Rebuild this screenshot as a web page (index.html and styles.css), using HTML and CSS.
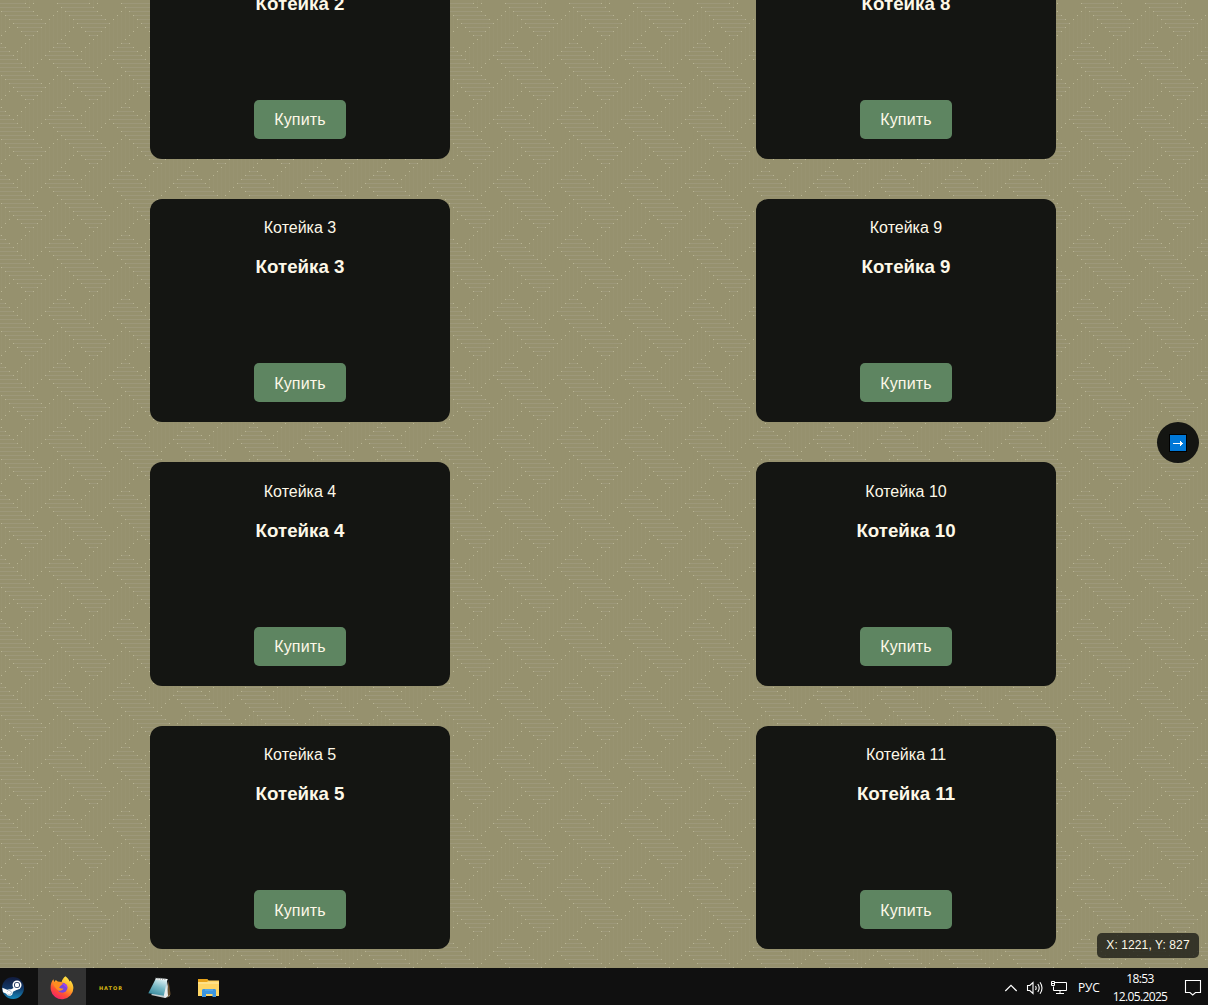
FILE: index.html
```html
<!DOCTYPE html>
<html lang="ru">
<head>
<meta charset="utf-8">
<title>Котейки</title>
<link rel="stylesheet" href="styles.css">
</head>
<body>
<div class="screen">
  <main class="page">
    <svg class="weave" aria-hidden="true">
      <defs>
        <pattern id="weave" width="64" height="64" patternUnits="userSpaceOnUse">
          <g shape-rendering="crispEdges" stroke-width="1" fill="none">
            <path stroke="#989371" d="M61.5 7V39M57.5 11V43M53.5 15V47M49.5 19V51M45.5 23V55M41.5 27V59M37.5 31V63M33.5 35V64M33.5 0V3M29.5 39V64M29.5 0V7M25.5 43V64M25.5 0V3M21.5 47V63M17.5 51V59M1.5 11V35M5.5 15V31M9.5 19V27"/>
            <path stroke="#9d987a" d="M57 3.5H64M0 3.5H25M61 7.5H64M0 7.5H29M1 11.5H33M5 15.5H37M9 19.5H41M13 23.5H45M17 27.5H41M21 31.5H37M25 35.5H33M57 43.5H64M0 43.5H1M53 47.5H64M0 47.5H5M49 51.5H64M0 51.5H9M45 55.5H64M0 55.5H13M49 59.5H64M0 59.5H17M53 63.5H64M0 63.5H21"/>
            <path stroke="#b9b593" d="M25 3.5h1M33 3.5h1M57 3.5h1M29 7.5h1M61 7.5h1M1 11.5h1M33 11.5h1M57 11.5h1M5 15.5h1M37 15.5h1M53 15.5h1M9 19.5h1M41 19.5h1M49 19.5h1M13 23.5h1M45 23.5h1M9 27.5h1M17 27.5h1M41 27.5h1M5 31.5h1M21 31.5h1M37 31.5h1M1 35.5h1M25 35.5h1M33 35.5h1M29 39.5h1M61 39.5h1M1 43.5h1M25 43.5h1M57 43.5h1M5 47.5h1M21 47.5h1M53 47.5h1M9 51.5h1M17 51.5h1M49 51.5h1M13 55.5h1M45 55.5h1M17 59.5h1M41 59.5h1M49 59.5h1M21 63.5h1M37 63.5h1M53 63.5h1"/>
          </g>
        </pattern>
      </defs>
      <rect width="100%" height="100%" fill="url(#weave)"/>
    </svg>
    <div class="catalog">
      <article class="card"><p class="name">Котейка 2</p><h3 class="title">Котейка 2</h3><button class="buy">Купить</button></article>
      <article class="card"><p class="name">Котейка 8</p><h3 class="title">Котейка 8</h3><button class="buy">Купить</button></article>
      <article class="card"><p class="name">Котейка 3</p><h3 class="title">Котейка 3</h3><button class="buy">Купить</button></article>
      <article class="card"><p class="name">Котейка 9</p><h3 class="title">Котейка 9</h3><button class="buy">Купить</button></article>
      <article class="card"><p class="name">Котейка 4</p><h3 class="title">Котейка 4</h3><button class="buy">Купить</button></article>
      <article class="card"><p class="name">Котейка 10</p><h3 class="title">Котейка 10</h3><button class="buy">Купить</button></article>
      <article class="card"><p class="name">Котейка 5</p><h3 class="title">Котейка 5</h3><button class="buy">Купить</button></article>
      <article class="card"><p class="name">Котейка 11</p><h3 class="title">Котейка 11</h3><button class="buy">Купить</button></article>
    </div>
    <button class="next" aria-label="Далее">
      <svg width="18" height="18" viewBox="0 0 18 18"><rect width="18" height="18" fill="#000"/><rect x="1" y="1" width="16" height="16" fill="#0078d7"/><path d="M4 9.5h9M11.5 7v5M12.5 8v3M13.5 9v1" stroke="#fff" fill="none"/></svg>
    </button>
    <div class="coords">X: 1221, Y: 827</div>
  </main>
  <footer class="taskbar">
    <nav class="apps">
      <span class="app app-first">
        <svg width="24" height="24" viewBox="0 0 24 24"><defs><linearGradient id="steam" x2="0" y2="1"><stop stop-color="#111b3d"/><stop offset=".5" stop-color="#123766"/><stop offset="1" stop-color="#1689bd"/></linearGradient></defs><circle cx="12" cy="12" r="11" fill="url(#steam)"/><path d="M1.3 11.8 8 14.5 12.5 12 14 8.5 18.5 12.5 12 15.8 9.5 19.5 2 16.2Z" fill="#fff"/><circle cx="16" cy="9" r="4.5" fill="#fff"/><circle cx="16" cy="9" r="3" fill="#18305a"/><circle cx="16" cy="9" r="2.2" fill="#fff"/><circle cx="8.5" cy="16.5" r="3.2" fill="#fff"/><path d="M6.2 15.7a2.2 2.2 0 1 1 .2 2.3" fill="none" stroke="#8fa5bf" stroke-width=".7"/></svg>
      </span>
      <span class="app app-active">
        <svg width="24" height="24" viewBox="0 0 24 24"><defs><linearGradient id="fox" x1=".85" y1="0" x2=".25" y2="1"><stop stop-color="#fff34f"/><stop offset=".4" stop-color="#ffad25"/><stop offset=".7" stop-color="#ff5034"/><stop offset="1" stop-color="#f21c70"/></linearGradient></defs><path d="M15.5.3C18 2.5 19 4 19.6 5.5l1-1c1.8 2.5 2.8 5 2.8 7.5A11.4 11.4 0 0 1 .8 14C.2 10 1 6 3.4 3.2L4.3 6 5.8 4 8 5.8l3.6.2c.6-2.2 2-4.5 3.9-5.7Z" fill="url(#fox)"/><circle cx="12.3" cy="11.8" r="5" fill="#7745dc"/><path d="M12 7.5c3.6-.7 6 1.8 5.5 5.3-.8-1-1.6-2.2-3-2.6Z" fill="#a344e8"/><path d="M3.5 6.5 8 5.8l4 .2.8 2-2.5 1.9-1.2 1.7c1.6 1.5 3.6.8 4.4 1-1 2.4-4.8 3.1-7 .3C5 11 3 9.5 3.5 6.5Z" fill="#ff8d20"/></svg>
      </span>
      <span class="app"><span class="hator">HATOR</span></span>
      <span class="app">
        <svg width="24" height="24" viewBox="0 0 24 24"><defs><linearGradient id="note" x1=".7" y1="0" x2=".3" y2="1"><stop stop-color="#e4f4f6"/><stop offset=".5" stop-color="#79b9c6"/><stop offset="1" stop-color="#35889c"/></linearGradient></defs><path d="M18.5 3 22 20 17 22 3 19Z" fill="#c3cbcd"/><path d="M20.5 4.5 22.6 18.5 19 22Z" fill="#6c512e"/><path d="M17.5 5 20.2 20 16.8 22 15.5 18Z" fill="#e9eeee"/><path d="M8 2.2 19.5 3 15.8 19.8.3 17.2Z" fill="url(#note)"/><path d="m8 2.2 11.5.8-.3 1.3L7.2 3.8Z" fill="#fff"/><path d="M7.8 1.5v2M10 1.5v2M12.3 1.7v2M14.6 1.9v2M16.9 2v2" stroke="#6b7474" stroke-width=".7"/></svg>
      </span>
      <span class="app">
        <svg width="24" height="24" viewBox="0 0 24 24"><path d="M1 3h9l1.5 1.6H22V20H1Z" fill="#ffd665"/><path d="M1 3h9l1.5 1.6L10 6H1Z" fill="#e7a219"/><path d="M1 6h21v2H1Z" fill="#ffe187"/><path d="M5 21v-6.5c0-1 .7-1.5 1.5-1.5h11c.8 0 1.5.5 1.5 1.5V21h-3.5v-3h-6.5v3Z" fill="#3c96df"/><path d="M8 14h8" stroke="#65b2ee"/></svg>
      </span>
    </nav>
    <div class="tray">
      <svg class="chevron" width="14" height="8" viewBox="0 0 14 8"><path d="m1.3 7 5.7-5.7L12.7 7" fill="none" stroke="#fff" stroke-width="1.2"/></svg>
      <svg class="sound" width="18" height="14" viewBox="0 0 18 14"><path d="M1.5 4.5h2.3L7 1.5v11L3.8 9.5H1.5ZM9.5 5q1.3 2 0 4M11.8 3q2.8 4 0 8M14 1.2q4 5.8 0 11.6" fill="none" stroke="#fff" stroke-width="1.1"/></svg>
      <svg class="network" width="18" height="15" viewBox="0 0 18 15"><path d="M5 2.5h11.5v8H3.5V6.5M10 10.5v3M6 13.5h8M1.5 1.5h3v4h-3ZM1.5 3.5h3" fill="none" stroke="#fff"/></svg>
      <span class="lang">РУС</span>
      <span class="clock"><span>18:53</span><span>12.05.2025</span></span>
      <svg class="notes" width="18" height="18" viewBox="0 0 18 18"><path d="M1.5 1.5h15v12h-5L8.7 16 6 13.5H1.5Z" fill="none" stroke="#fff" stroke-width="1.1"/></svg>
    </div>
  </footer>
</div>
</body>
</html>
```
FILE: styles.css
```css
* { box-sizing: border-box; }

body {
  margin: 0;
  font-family: "Liberation Sans", Arial, sans-serif;
}

.screen {
  display: flex;
  flex-direction: column;
  width: 1208px;
  height: 1005px;
  overflow: hidden;
}

.page {
  position: relative;
  flex: 1;
  min-height: 0;
  overflow: hidden;
  background: #96916e;
}

.weave {
  position: absolute;
  inset: 0;
  width: 100%;
  height: 100%;
}

.catalog {
  position: relative;
  display: grid;
  grid-template-columns: 300px 300px;
  grid-auto-rows: 223.5px;
  gap: 40px 306px;
  margin: -64.7px 0 0 150px;
}

.card {
  display: flex;
  flex-direction: column;
  align-items: center;
  padding: 20px;
  border-radius: 12px;
  background: #141512;
  color: #fdf8e8;
}

.name {
  margin: 0.25px 0 0;
  font-size: 16px;
  line-height: 18px;
}

.title {
  margin: 19px 0 0;
  font-size: 18.72px;
  line-height: 21px;
}

.buy {
  width: 92px;
  height: 39px;
  margin: auto 0 0;
  padding: 2px 0 0;
  border: 0;
  border-radius: 5px;
  background: #5e8561;
  color: #fdf8e8;
  font: 16px "Liberation Sans", Arial, sans-serif;
  letter-spacing: 0.15px;
}

.next {
  position: absolute;
  top: 422px;
  right: 9px;
  display: flex;
  align-items: center;
  justify-content: center;
  width: 42px;
  height: 41px;
  padding: 0;
  border: 0;
  border-radius: 50%;
  background: #141512;
}

.coords {
  position: absolute;
  right: 9px;
  bottom: 10px;
  width: 102px;
  height: 25px;
  border-radius: 5px;
  background: rgba(20, 21, 18, 0.75);
  color: #fdf8e8;
  font-size: 12px;
  letter-spacing: 0.1px;
  line-height: 25px;
  text-align: center;
}

.taskbar {
  display: flex;
  justify-content: space-between;
  height: 37px;
  background: #101010;
  color: #fff;
}

.apps { display: flex; }

.app {
  display: flex;
  align-items: center;
  justify-content: center;
  width: 48px;
  height: 37px;
  padding-top: 2px;
  margin-right: 1px;
}

.app-first {
  width: 38px;
  margin: 0;
  padding-right: 12px;
}

.app-active { background: #333; }

.hator {
  color: #d8b813;
  font: bold 5px "DejaVu Sans", sans-serif;
  letter-spacing: 1px;
}

.tray {
  display: flex;
  align-items: center;
  padding: 2px 6px 0 0;
  font-family: "Open Sans", "Noto Sans", sans-serif;
  font-size: 12px;
}

.chevron { margin-right: 8px; }
.sound { margin-right: 6px; }
.network { margin-right: 10px; }

.lang {
  width: 24px;
  margin-right: 10px;
  letter-spacing: -0.2px;
}

.clock {
  display: flex;
  flex-direction: column;
  width: 56px;
  margin-right: 16px;
  text-align: center;
  line-height: 18px;
  letter-spacing: -0.65px;
}
```
